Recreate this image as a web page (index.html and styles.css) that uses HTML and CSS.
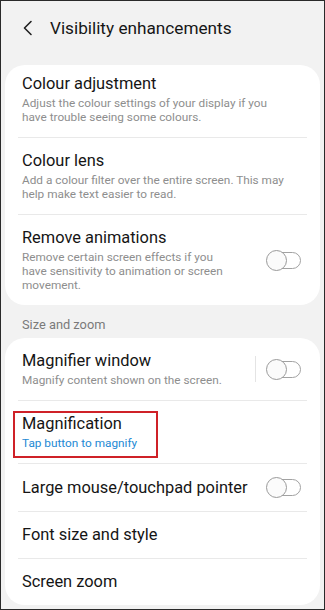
FILE: index.html
```html
<!DOCTYPE html>
<html>

<head>
    <link rel="stylesheet" href="styles.css">
</head>

<body>
    <div class="screen">
        <div class="topbar">
            <svg class="back" width="12" height="16" viewBox="0 0 12 16">
                <path d="M9 1.5 L2.5 8 L9 14.5" fill="none" stroke="#222" stroke-width="1.6" stroke-linecap="round" stroke-linejoin="round"/>
            </svg>
            <h1 class="title">Visibility enhancements</h1>
        </div>

        <div class="card">
            <div class="row first">
                <div class="row-text">
                    <div class="label">Colour adjustment</div>
                    <div class="sub">Adjust the colour settings of your display if you have trouble seeing some colours.</div>
                </div>
            </div>
            <div class="divider"></div>
            <div class="row">
                <div class="row-text">
                    <div class="label">Colour lens</div>
                    <div class="sub">Add a colour filter over the entire screen. This may help make text easier to read.</div>
                </div>
            </div>
            <div class="divider"></div>
            <div class="row has-switch">
                <div class="row-text">
                    <div class="label">Remove animations</div>
                    <div class="sub">Remove certain screen effects if you have sensitivity to animation or screen movement.</div>
                </div>
                <div class="toggle">
                    <div class="track"></div>
                    <div class="knob"></div>
                </div>
            </div>
        </div>

        <div class="section">Size and zoom</div>

        <div class="card">
            <div class="row first has-switch">
                <div class="row-text">
                    <div class="label">Magnifier window</div>
                    <div class="sub">Magnify content shown on the screen.</div>
                </div>
                <div class="sep"></div>
                <div class="toggle">
                    <div class="track"></div>
                    <div class="knob"></div>
                </div>
            </div>
            <div class="divider"></div>
            <div class="row">
                <div class="row-text">
                    <div class="label">Magnification</div>
                    <div class="sub blue">Tap button to magnify</div>
                </div>
                <div class="highlight"></div>
            </div>
            <div class="divider"></div>
            <div class="row single has-switch">
                <div class="row-text">
                    <div class="label">Large mouse/touchpad pointer</div>
                </div>
                <div class="toggle">
                    <div class="track"></div>
                    <div class="knob"></div>
                </div>
            </div>
            <div class="divider"></div>
            <div class="row single">
                <div class="row-text">
                    <div class="label">Font size and style</div>
                </div>
            </div>
            <div class="divider"></div>
            <div class="row single">
                <div class="row-text">
                    <div class="label">Screen zoom</div>
                </div>
            </div>
        </div>
    </div>
</body>

</html>
```

FILE: styles.css
```css
body {
    margin: 0;
    font-family: Roboto, "Noto Sans", sans-serif;
}

.screen {
    width: 325px;
    height: 610px;
    box-sizing: border-box;
    border: 1px solid #2a2a2a;
    background-color: #f2f2f2;
    padding: 0 4px;
    overflow: hidden;
}

.topbar {
    display: flex;
    align-items: center;
    height: 24px;
    padding-top: 15px;
    margin-bottom: 25px;
}

.back {
    margin-left: 17px;
    margin-right: 16px;
}

.title {
    margin: 0;
    font-size: 17.2px;
    font-weight: 400;
    line-height: 24px;
    color: #161616;
}

.card {
    background-color: #fff;
    border-radius: 20px;
}

.row {
    position: relative;
    display: flex;
    align-items: center;
    padding: 13px 19px 13px 17px;
}

.row.first {
    padding-top: 9px;
}

.card + .section + .card .row.first {
    padding-top: 13px;
}

.row-text {
    flex: 1;
}

.label {
    font-size: 16.4px;
    line-height: 20px;
    color: #151515;
}

.sub {
    max-width: 266px;
    margin-top: 2px;
    font-size: 11.8px;
    line-height: 14px;
    color: #8e8e8e;
}

.sub.blue {
    color: #2389d4;
}

.has-switch .sub {
    max-width: 212px;
}

.divider {
    height: 1px;
    background-color: #e9e9e9;
    margin: 0 13px;
}

.section {
    font-size: 12.8px;
    line-height: 16px;
    color: #7a7a7a;
    padding-left: 17px;
    margin: 12px 0 5px;
}

.sep {
    width: 1px;
    height: 26px;
    background-color: #e4e4e4;
    margin-right: 10px;
}

.toggle {
    position: relative;
    width: 35px;
    height: 21px;
    margin-left: 16px;
}

.sep + .toggle {
    margin-left: 0;
}

.track {
    position: absolute;
    left: 2px;
    right: 0;
    top: 2px;
    height: 17px;
    box-sizing: border-box;
    border: 1.3px solid #a2a2a2;
    border-radius: 9px;
}

.knob {
    position: absolute;
    left: 0;
    top: 0;
    width: 21px;
    height: 21px;
    box-sizing: border-box;
    border: 1.3px solid #9a9a9a;
    border-radius: 50%;
    background-color: #fbfbfb;
}

.highlight {
    position: absolute;
    left: 8px;
    top: 10px;
    width: 145px;
    height: 47px;
    box-sizing: border-box;
    border: 2px solid #cf2128;
}
```
